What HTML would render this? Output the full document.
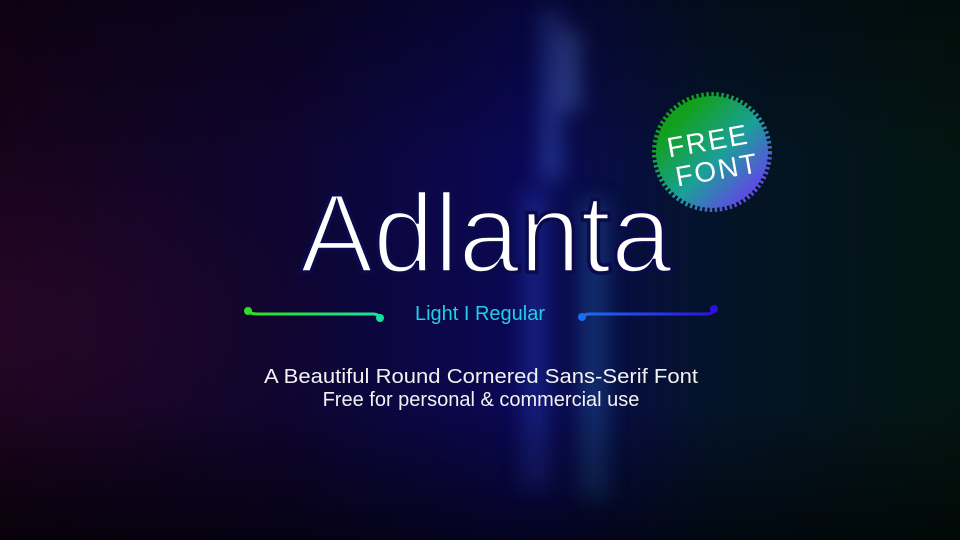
<!DOCTYPE html>
<html><head><meta charset="utf-8"><style>
html,body{margin:0;padding:0;width:960px;height:540px;overflow:hidden;background:#070418}
</style></head><body>
<svg width="960" height="540" viewBox="0 0 960 540" xmlns="http://www.w3.org/2000/svg">
<defs>
<linearGradient id="bg" x1="0" y1="0" x2="1" y2="0">
<stop offset="0" stop-color="#16031a"/>
<stop offset="0.3" stop-color="#0e0530"/>
<stop offset="0.55" stop-color="#0a0856"/>
<stop offset="0.75" stop-color="#041428"/>
<stop offset="1" stop-color="#031510"/>
</linearGradient>
<radialGradient id="pk" cx="0" cy="0.6" r="0.35">
<stop offset="0" stop-color="#3a0a35" stop-opacity="0.45"/>
<stop offset="1" stop-color="#3a0a35" stop-opacity="0"/>
</radialGradient>
<linearGradient id="dark" x1="0" y1="0" x2="0" y2="1">
<stop offset="0" stop-color="#000" stop-opacity="0.35"/>
<stop offset="0.3" stop-color="#000" stop-opacity="0"/>
<stop offset="0.75" stop-color="#000" stop-opacity="0"/>
<stop offset="1" stop-color="#000" stop-opacity="0.6"/>
</linearGradient>
<filter id="bl" x="-1" y="-1" width="3" height="3"><feGaussianBlur stdDeviation="10"/></filter>
<linearGradient id="badge" x1="0" y1="0" x2="1" y2="1">
<stop offset="0.2" stop-color="#12a01c"/>
<stop offset="0.55" stop-color="#1aa098"/>
<stop offset="0.9" stop-color="#6a3cf0"/>
</linearGradient>
<linearGradient id="gl" x1="0" x2="1"><stop offset="0" stop-color="#2ae020"/><stop offset="1" stop-color="#18e0a0"/></linearGradient>
<linearGradient id="bl2" x1="0" x2="1"><stop offset="0" stop-color="#1870f0"/><stop offset="1" stop-color="#3010e0"/></linearGradient>
</defs>
<rect width="960" height="540" fill="url(#bg)"/>
<rect width="960" height="540" fill="url(#pk)"/>
<g filter="url(#bl)" opacity="0.55">
<rect x="540" y="10" width="22" height="170" fill="#3050c0"/>
<rect x="522" y="190" width="26" height="300" fill="#2030a0"/>
<rect x="580" y="200" width="28" height="300" fill="#1a4a90"/>
<rect x="560" y="30" width="20" height="80" fill="#5070d0"/>
</g>
<rect width="960" height="540" fill="url(#dark)"/>

<text x="486" y="272" text-anchor="middle" fill="#fff" stroke="#0b0a4a" stroke-width="3.5" font-family="Liberation Sans, sans-serif" font-size="112" textLength="372" lengthAdjust="spacingAndGlyphs">Adlanta</text>

<g transform="translate(712,152)">
<circle r="56" fill="url(#badge)"/>
<circle r="57.5" fill="none" stroke="url(#badge)" stroke-width="5" stroke-dasharray="2.5 2.5"/>
<g transform="rotate(-10)" fill="#fff" font-family="Liberation Sans, sans-serif" font-size="28" text-anchor="middle" letter-spacing="2">
<text x="-2" y="-2">FREE</text>
<text x="2" y="28">FONT</text>
</g>
</g>

<path d="M248 311 Q250 314 258 314 L374 314 Q380 315 380 318" stroke="url(#gl)" stroke-width="3" fill="none"/>
<circle cx="248" cy="311" r="4" fill="#2ae020"/>
<circle cx="380" cy="318" r="4" fill="#18e0a0"/>
<path d="M582 317 Q584 314 590 314 L708 314 Q714 313 714 309" stroke="url(#bl2)" stroke-width="3" fill="none"/>
<circle cx="582" cy="317" r="4" fill="#1870f0"/>
<circle cx="714" cy="309" r="4" fill="#3010e0"/>
<text x="480" y="320" text-anchor="middle" fill="#1fd0e8" font-family="Liberation Sans, sans-serif" font-size="20">Light I Regular</text>

<g fill="#f2f2f2" font-family="Liberation Sans, sans-serif" font-size="20" text-anchor="middle">
<text x="481" y="383" textLength="434" lengthAdjust="spacingAndGlyphs">A Beautiful Round Cornered Sans-Serif Font</text>
<text x="481" y="406">Free for personal &amp; commercial use</text>
</g>
</svg>
</body></html>
